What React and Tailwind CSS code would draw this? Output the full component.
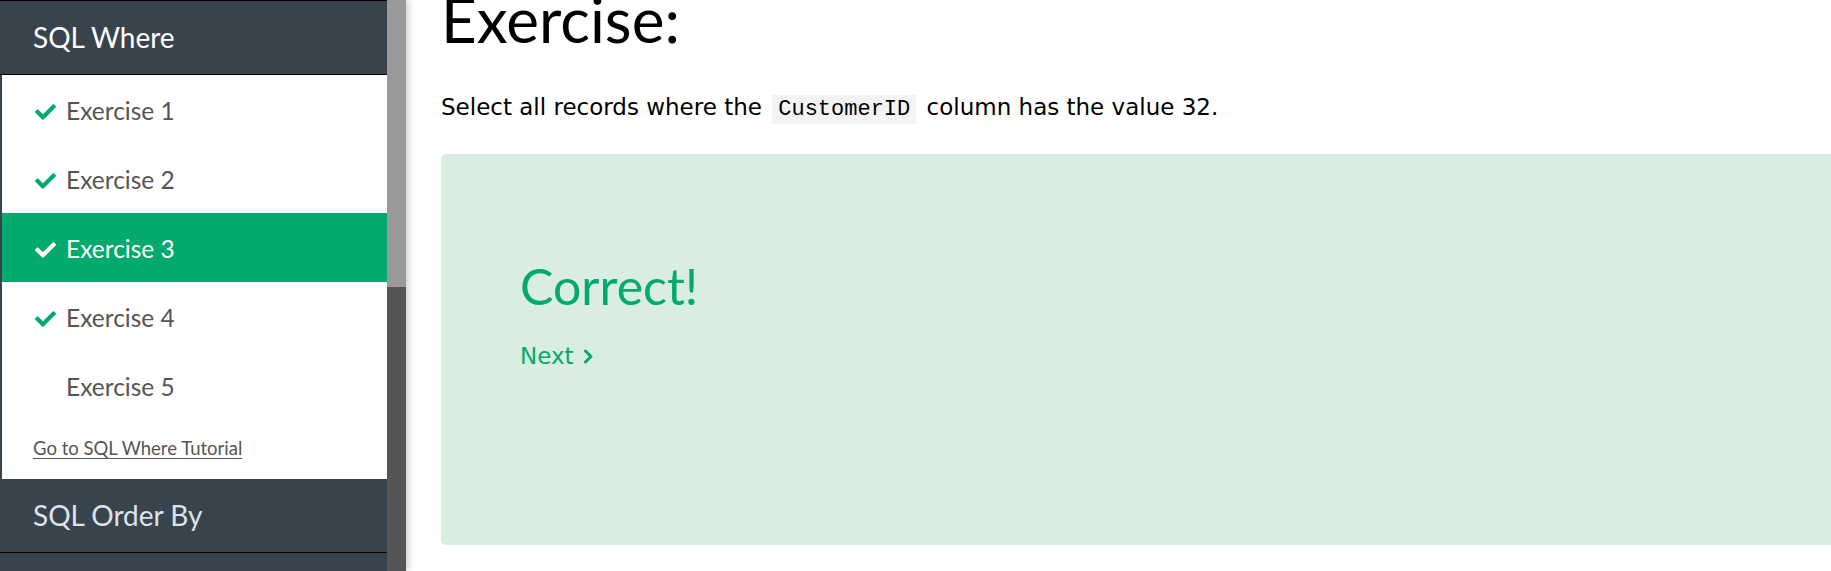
function Check({ className }) {
  return (
    <svg viewBox="0 60 512 392" className={className} fill="currentColor" aria-hidden="true">
      <path d="M173.898 439.404l-166.4-166.4c-9.997-9.997-9.997-26.206 0-36.204l36.203-36.204c9.997-9.998 26.207-9.998 36.204 0L192 312.69 432.095 72.596c9.997-9.997 26.207-9.997 36.204 0l36.203 36.204c9.997 9.997 9.997 26.206 0 36.204l-294.4 294.401c-9.998 9.997-26.207 9.997-36.204-.001z" />
    </svg>
  );
}

const exercises = [
  { n: 1, done: true },
  { n: 2, done: true },
  { n: 3, done: true, active: true },
  { n: 4, done: true },
  { n: 5, done: false },
];

export default function App() {
  return (
    <div className="flex h-[571px] w-[1831px] overflow-hidden bg-white">
      {/* sidebar */}
      <aside className="relative z-10 flex shrink-0 shadow-[3px_0_6px_rgba(0,0,0,0.18)]">
        <div className="w-[387px] bg-[#38444d] border-t border-black font-['Lato',sans-serif]">
          <div className="h-[74px] flex items-center pl-[33px] pb-[2px] text-white text-[28px] border-b border-black">
            SQL Where
          </div>
          <div className="ml-[2px] bg-white">
            {exercises.map((ex) => (
              <div
                key={ex.n}
                className={`h-[69px] flex items-center pl-[33px] pt-[4px] text-[24.5px] ${
                  ex.active ? "bg-[#04aa6d] text-white" : "text-[#555]"
                }`}
              >
                <span className={`w-[21px] mr-[10px] flex items-center ${ex.active ? "text-white" : "text-[#04aa6d]"}`}>
                  {ex.done && <Check className="w-[21px] h-[16px]" />}
                </span>
                Exercise {ex.n}
              </div>
            ))}
            <div className="h-[59px] flex items-center pl-[31px] pb-[2px]">
              <a href="#" className="text-[#555] text-[18.5px] underline underline-offset-[3px]">
                Go to SQL Where Tutorial
              </a>
            </div>
          </div>
          <div className="h-[74px] flex items-center pl-[33px] pb-[2px] text-[#dde3e8] text-[28px] border-b border-black">
            SQL Order By
          </div>
        </div>
        {/* scrollbar */}
        <div className="w-[19px] flex flex-col bg-[#555]">
          <div className="h-[287px] bg-[#9a9a9a]"></div>
        </div>
      </aside>

      {/* main content */}
      <main className="flex-1 min-w-0 pl-[35px] overflow-hidden">
        <h1 className="font-['Lato',sans-serif] text-[62px] leading-none text-black -mt-[12px]">Exercise:</h1>
        <p className="mt-[42px] font-['DejaVu_Sans',sans-serif] text-[23px] leading-[30px] text-black">
          Select all records where the{" "}
          <code className="font-['Liberation_Mono',monospace] text-[22px] bg-[#f3f3f3] px-[6px] py-[2px] mx-[3px]">
            CustomerID
          </code>{" "}
          column has the value 32.
        </p>
        <div className="mt-[29px] h-[391px] w-[1500px] rounded-[5px] bg-[#d9eee1] pl-[79px] pt-[107px]">
          <div className="font-['Lato',sans-serif] text-[50px] leading-none text-[#04aa6d]">Correct!</div>
          <a href="#" className="mt-[28px] inline-flex items-center gap-[9px] font-['DejaVu_Sans',sans-serif] text-[23px] text-[#04aa6d]">
            Next
            <svg viewBox="0 0 10 16" className="w-[10px] h-[17px]" fill="none" stroke="currentColor" strokeWidth="3" strokeLinecap="round" strokeLinejoin="round">
              <path d="M2.5 2.5l5.5 5.5-5.5 5.5" />
            </svg>
          </a>
        </div>
      </main>
    </div>
  );
}
